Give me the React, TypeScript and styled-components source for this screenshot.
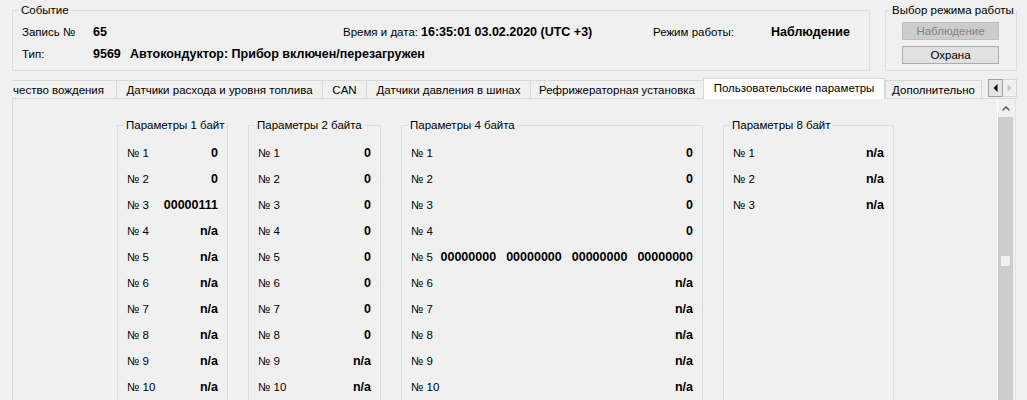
import React from "react";
import styled, { createGlobalStyle } from "styled-components";

const GlobalStyle = createGlobalStyle`
  html, body {
    margin: 0;
    padding: 0;
    background: #f0f0f0;
  }
  body {
    font-family: "Liberation Sans", Arial, sans-serif;
    font-size: 11.5px;
    color: #000;
  }
`;

const Window = styled.div`
  width: 1027px;
  height: 400px;
  overflow: hidden;
  box-sizing: border-box;
  padding: 4px 10px 0 12px;
  background: #f0f0f0;
  display: flex;
  flex-direction: column;
`;

const Header = styled.div`
  display: flex;
  gap: 15px;
  height: 67px;
  flex-shrink: 0;
`;

const GroupBox = styled.fieldset<{ $width: number; $pad?: number }>`
  margin: 0;
  min-width: 0;
  width: ${p => p.$width}px;
  box-sizing: border-box;
  border: 1px solid #dcdcdc;
  padding: 0 ${p => p.$pad ?? 9}px;
`;

const Legend = styled.legend`
  padding: 0 2px;
  margin-left: -3px;
  line-height: 13px;
  font-size: 11.5px;
  white-space: nowrap;
`;

const InfoRows = styled.div`
  display: flex;
  flex-direction: column;
  margin-top: 4px;
`;

const InfoRow = styled.div`
  display: flex;
  align-items: center;
  height: 22px;
  white-space: nowrap;
`;

const FieldLabel = styled.span<{ $w?: number }>`
  flex: 0 0 ${p => (p.$w ? `${p.$w}px` : "auto")};
`;

const FieldValue = styled.span<{ $w?: number }>`
  flex: 0 0 ${p => (p.$w ? `${p.$w}px` : "auto")};
  font-weight: bold;
  font-size: 12.5px;
`;

const ButtonStack = styled.div`
  display: flex;
  flex-direction: column;
  gap: 6px;
  margin: 5px 0 0 9px;
`;

const ModeButton = styled.button<{ $disabled?: boolean }>`
  width: 97px;
  height: 18px;
  box-sizing: border-box;
  padding: 0;
  font-family: inherit;
  font-size: 11.5px;
  border: 1px solid ${p => (p.$disabled ? "#bfbfbf" : "#adadad")};
  background: ${p => (p.$disabled ? "#cccccc" : "#e1e1e1")};
  color: ${p => (p.$disabled ? "#838383" : "#000")};
`;

const TabStrip = styled.div`
  display: flex;
  align-items: flex-end;
  height: 20px;
  margin-top: 7px;
  flex-shrink: 0;
  position: relative;
  z-index: 1;
`;

const Tab = styled.div<{ $width: number; $active?: boolean; $clipped?: boolean }>`
  width: ${p => p.$width}px;
  flex-shrink: 0;
  box-sizing: border-box;
  height: ${p => (p.$active ? 21 : 18)}px;
  margin-bottom: ${p => (p.$active ? -1 : 0)}px;
  border: 1px solid #d9d9d9;
  border-bottom: none;
  border-left-color: ${p => (p.$clipped ? "transparent" : "#d9d9d9")};
  border-right: ${p => (p.$active ? "1px solid #d9d9d9" : "none")};
  background: ${p => (p.$active ? "#ffffff" : "#f0f0f0")};
  display: flex;
  align-items: center;
  justify-content: ${p => (p.$clipped ? "flex-start" : "center")};
  padding: ${p => (p.$active ? "0 0 2px" : "0")};
  white-space: nowrap;
  overflow: hidden;
`;

const LastTabEdge = styled.div`
  width: 1px;
  height: 18px;
  background: #d9d9d9;
`;

const TabScroll = styled.div`
  display: flex;
  margin-left: auto;
  align-self: flex-start;
  margin-top: 1px;
`;

const ScrollArrow = styled.div<{ $disabled?: boolean }>`
  width: 15px;
  height: 18px;
  box-sizing: border-box;
  border: 1px solid ${p => (p.$disabled ? "#d6d6d6" : "#a0a0a0")};
  background: ${p => (p.$disabled ? "#f0f0f0" : "#e5e5e5")};
  display: flex;
  align-items: center;
  justify-content: center;
  & + & {
    border-left: none;
    width: 14px;
  }
`;

const Panel = styled.div`
  flex: 1;
  min-height: 0;
  display: flex;
  border: 1px solid #d9d9d9;
  border-right-color: #e4e4e4;
  border-bottom: none;
  margin-right: 1px;
`;

const PageContent = styled.div`
  flex: 1;
  display: flex;
  gap: 20px;
  align-items: stretch;
  padding: 20px 0 0 104px;
  overflow: hidden;
`;

const ParamGroup = styled(GroupBox)`
  height: 420px;
  flex-shrink: 0;
`;

const ParamRows = styled.div`
  display: flex;
  flex-direction: column;
  padding-top: 8px;
`;

const ParamRow = styled.div`
  display: flex;
  align-items: center;
  justify-content: space-between;
  height: 26px;
  white-space: nowrap;
`;

const ParamValue = styled.span`
  display: flex;
  gap: 10px;
  font-weight: bold;
  font-size: 12.5px;
`;

const ScrollBar = styled.div`
  width: 15px;
  flex-shrink: 0;
  border-left: 1px solid #ffffff;
  margin-right: 2px;
  display: flex;
  flex-direction: column;
`;

const ScrollUp = styled.div`
  height: 18px;
  display: flex;
  align-items: center;
  justify-content: center;
  background: #f0f0f0;
`;

const ScrollTrack = styled.div`
  flex: 1;
  background: #cdcdcd;
  display: flex;
  justify-content: center;
  padding-top: 139px;
`;

const ScrollGrip = styled.div`
  width: 9px;
  height: 10px;
  background: #f0f0f0;
`;

type Group = { title: string; width: number; rows: (string | string[])[] };

const GROUPS: Group[] = [
  {
    title: "Параметры 1 байт",
    width: 111,
    rows: ["0", "0", "00000111", "n/a", "n/a", "n/a", "n/a", "n/a", "n/a", "n/a"],
  },
  {
    title: "Параметры 2 байта",
    width: 133,
    rows: ["0", "0", "0", "0", "0", "0", "0", "0", "n/a", "n/a"],
  },
  {
    title: "Параметры 4 байта",
    width: 302,
    rows: [
      "0",
      "0",
      "0",
      "0",
      ["00000000", "00000000", "00000000", "00000000"],
      "n/a",
      "n/a",
      "n/a",
      "n/a",
      "n/a",
    ],
  },
  { title: "Параметры 8 байт", width: 171, rows: ["n/a", "n/a", "n/a"] },
];

const TABS = [
  { label: "чество вождения", width: 104, clipped: true },
  { label: "Датчики расхода и уровня топлива", width: 206 },
  { label: "CAN", width: 44 },
  { label: "Датчики давления в шинах", width: 164 },
  { label: "Рефрижераторная установка", width: 173 },
  { label: "Пользовательские параметры", width: 182, active: true },
  { label: "Дополнительно", width: 96 },
];

export default function App() {
  return (
    <>
      <GlobalStyle />
      <Window>
        <Header>
          <GroupBox $width={858}>
            <Legend>Событие</Legend>
            <InfoRows>
              <InfoRow>
                <FieldLabel $w={71}>Запись №</FieldLabel>
                <FieldValue $w={250}>65</FieldValue>
                <FieldLabel $w={78}>Время и дата:</FieldLabel>
                <FieldValue $w={232}>16:35:01 03.02.2020 (UTC +3)</FieldValue>
                <FieldLabel $w={118}>Режим работы:</FieldLabel>
                <FieldValue>Наблюдение</FieldValue>
              </InfoRow>
              <InfoRow>
                <FieldLabel $w={71}>Тип:</FieldLabel>
                <FieldValue $w={37}>9569</FieldValue>
                <FieldValue>Автокондуктор: Прибор включен/перезагружен</FieldValue>
              </InfoRow>
            </InfoRows>
          </GroupBox>
          <GroupBox $width={132} $pad={7}>
            <Legend>Выбор режима работы</Legend>
            <ButtonStack>
              <ModeButton $disabled disabled>
                Наблюдение
              </ModeButton>
              <ModeButton>Охрана</ModeButton>
            </ButtonStack>
          </GroupBox>
        </Header>

        <TabStrip>
          {TABS.map(t => (
            <Tab key={t.label} $width={t.width} $active={t.active} $clipped={t.clipped}>
              {t.label}
            </Tab>
          ))}
          <LastTabEdge />
          <TabScroll>
            <ScrollArrow>
              <svg width="5" height="8" viewBox="0 0 5 8">
                <path d="M4.5 0 L0.5 4 L4.5 8 Z" fill="#000" />
              </svg>
            </ScrollArrow>
            <ScrollArrow $disabled>
              <svg width="5" height="8" viewBox="0 0 5 8">
                <path d="M0.5 0 L4.5 4 L0.5 8 Z" fill="#c4c4c4" />
              </svg>
            </ScrollArrow>
          </TabScroll>
        </TabStrip>

        <Panel>
          <PageContent>
            {GROUPS.map(g => (
              <ParamGroup key={g.title} $width={g.width}>
                <Legend>{g.title}</Legend>
                <ParamRows>
                  {g.rows.map((v, i) => (
                    <ParamRow key={i}>
                      <span>№ {i + 1}</span>
                      <ParamValue>
                        {Array.isArray(v) ? v.map((p, j) => <span key={j}>{p}</span>) : v}
                      </ParamValue>
                    </ParamRow>
                  ))}
                </ParamRows>
              </ParamGroup>
            ))}
          </PageContent>
          <ScrollBar>
            <ScrollUp>
              <svg width="8" height="5" viewBox="0 0 8 5">
                <path d="M0.7 4.3 L4 1 L7.3 4.3" fill="none" stroke="#606060" strokeWidth="1.6" />
              </svg>
            </ScrollUp>
            <ScrollTrack>
              <ScrollGrip />
            </ScrollTrack>
          </ScrollBar>
        </Panel>
      </Window>
    </>
  );
}
